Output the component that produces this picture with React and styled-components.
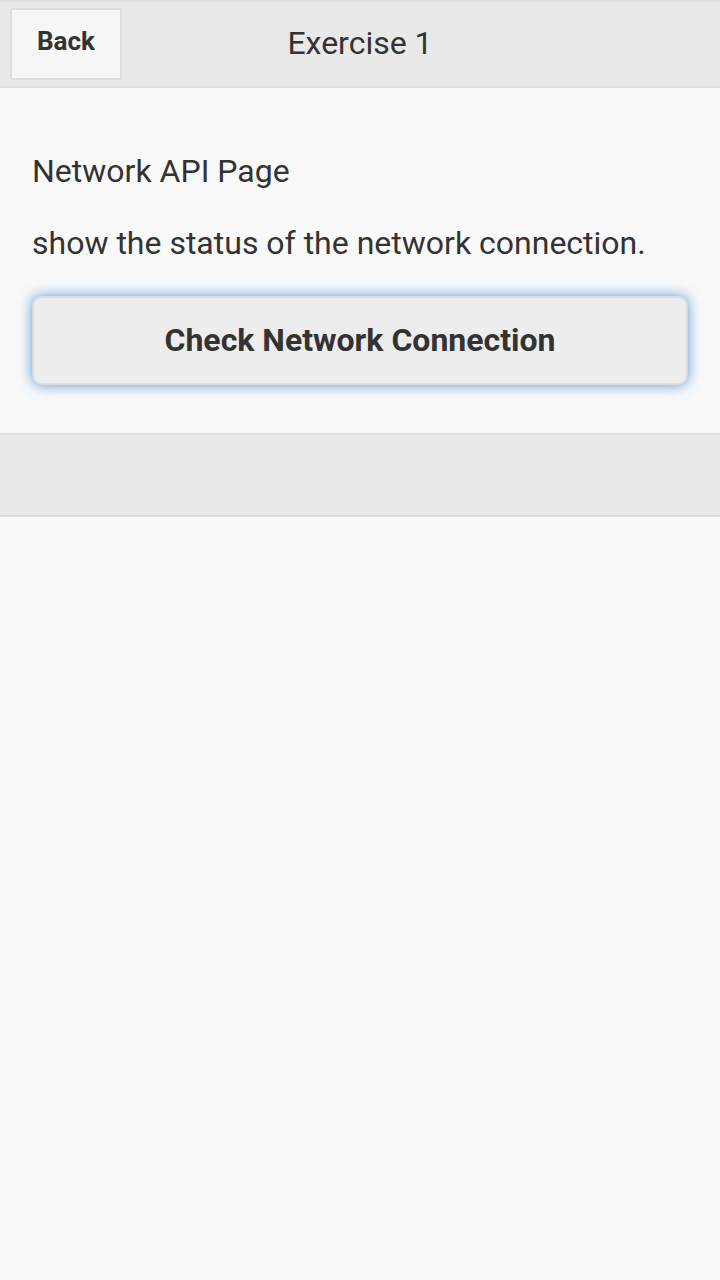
import React from "react";
import styled, { createGlobalStyle } from "styled-components";

const GlobalStyle = createGlobalStyle`
  html, body {
    margin: 0;
    padding: 0;
    background: #f9f9f9;
    font-family: Roboto, "Noto Sans", "Liberation Sans", sans-serif;
    color: #333;
  }
`;

const Page = styled.div`
  display: flex;
  flex-direction: column;
  min-height: 1280px;
  background: #f9f9f9;
`;

const Bar = styled.div`
  display: flex;
  align-items: center;
  position: relative;
  height: ${(p) => p.height}px;
  box-sizing: border-box;
  background: #e9e9e9;
  border-top: 2px solid #ddd;
  border-bottom: 2px solid #ddd;
`;

const BackButton = styled.button`
  position: absolute;
  left: 10px;
  top: 6px;
  width: 112px;
  height: 72px;
  box-sizing: border-box;
  background: #f6f6f6;
  border: 2px solid #ddd;
  border-radius: 2px;
  font-family: inherit;
  font-size: 26px;
  font-weight: 700;
  color: #333;
  padding: 0 0 6px;
`;

const Title = styled.h1`
  flex: 1;
  margin: 0 0 2px;
  text-align: center;
  font-size: 32px;
  font-weight: 400;
  color: #333;
`;

const Content = styled.div`
  padding: 32px;
`;

const Text = styled.p`
  margin: 0 0 33px;
  font-size: 32px;
  line-height: 40px;
  &:first-child {
    margin-top: 31px;
    margin-bottom: 32px;
  }
`;

const ActionButton = styled.button`
  display: block;
  width: 100%;
  height: 89px;
  margin: 2px 0 16px;
  padding: 0 0 2px;
  box-sizing: border-box;
  background: #ededed;
  border: 2px solid #ddd;
  border-radius: 10px;
  box-shadow: 0 0 14px rgba(51, 136, 204, 0.85);
  font-family: inherit;
  font-size: 32px;
  font-weight: 700;
  color: #333;
`;

export default function App() {
  return (
    <Page>
      <GlobalStyle />
      <Bar height={88}>
        <BackButton>Back</BackButton>
        <Title>Exercise 1</Title>
      </Bar>
      <Content>
        <Text>Network API Page</Text>
        <Text>show the status of the network connection.</Text>
        <ActionButton>Check Network Connection</ActionButton>
      </Content>
      <Bar height={84} />
    </Page>
  );
}
